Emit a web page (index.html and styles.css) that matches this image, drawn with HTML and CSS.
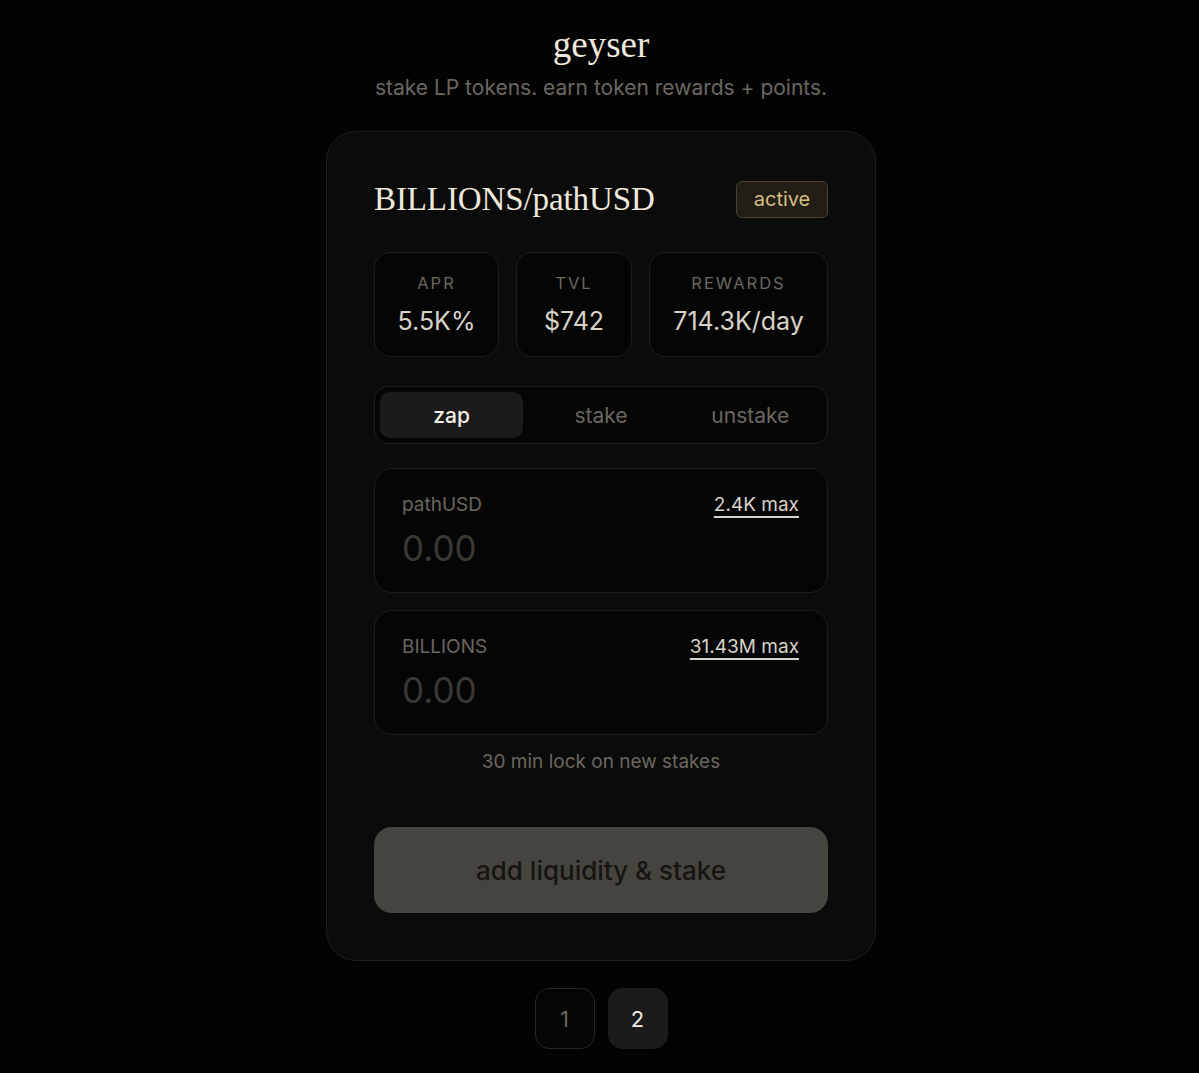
FILE: index.html
```html
<!DOCTYPE html>
<html lang="en">
<head>
<meta charset="utf-8">
<title>geyser</title>
<link rel="stylesheet" href="styles.css">
</head>
<body>
<main class="page">
  <header class="hero">
    <h1 class="brand">geyser</h1>
    <p class="tagline">stake LP tokens. earn token rewards + points.</p>
  </header>

  <section class="card">
    <div class="card-head">
      <h2 class="pair">BILLIONS/pathUSD</h2>
      <span class="badge">active</span>
    </div>

    <div class="stats">
      <div class="stat stat-apr">
        <div class="stat-label">APR</div>
        <div class="stat-value">5.5K%</div>
      </div>
      <div class="stat stat-tvl">
        <div class="stat-label">TVL</div>
        <div class="stat-value">$742</div>
      </div>
      <div class="stat stat-rewards">
        <div class="stat-label">REWARDS</div>
        <div class="stat-value">714.3K/day</div>
      </div>
    </div>

    <div class="tabs">
      <button class="tab is-active">zap</button>
      <button class="tab">stake</button>
      <button class="tab">unstake</button>
    </div>

    <div class="field">
      <div class="field-row">
        <span class="field-label">pathUSD</span>
        <a class="field-max">2.4K max</a>
      </div>
      <div class="field-value">0.00</div>
    </div>

    <div class="field">
      <div class="field-row">
        <span class="field-label">BILLIONS</span>
        <a class="field-max">31.43M max</a>
      </div>
      <div class="field-value">0.00</div>
    </div>

    <p class="note">30 min lock on new stakes</p>

    <button class="cta">add liquidity &amp; stake</button>
  </section>

  <nav class="pager">
    <button class="page-btn">1</button>
    <button class="page-btn is-current">2</button>
  </nav>
</main>
</body>
</html>
```

FILE: styles.css
```css
* { box-sizing: border-box; }

html, body {
  margin: 0;
  padding: 0;
  background: #030303;
}

body {
  font-family: Inter, "Noto Sans", sans-serif;
  color: #d8d2c8;
}

.page {
  display: flex;
  flex-direction: column;
  align-items: center;
  padding-top: 23px;
  padding-left: 3px;
}

.hero {
  text-align: center;
}

.brand {
  margin: 0;
  font-family: "Liberation Serif", serif;
  font-weight: 400;
  font-size: 37px;
  line-height: 44px;
  color: #eee8dc;
}

.tagline {
  margin: 0;
  margin-top: 8px;
  font-size: 21px;
  line-height: 26px;
  color: #6b6760;
}

.card {
  margin-top: 30px;
  width: 550px;
  padding: 48px 47px 47px 47px;
  background: #0b0b0b;
  border: 1px solid #1e1e1e;
  border-radius: 30px;
  display: flex;
  flex-direction: column;
}

.card-head {
  display: flex;
  justify-content: space-between;
  align-items: center;
  height: 38px;
}

.pair {
  margin: 0;
  font-family: "Liberation Serif", serif;
  font-weight: 400;
  font-size: 33px;
  line-height: 38px;
  color: #eee8dc;
  letter-spacing: -0.1px;
}

.badge {
  display: inline-flex;
  align-items: center;
  justify-content: center;
  width: 92px;
  height: 37px;
  background: #221e16;
  border: 1px solid #4a4130;
  border-radius: 6px;
  color: #d6bd82;
  font-size: 20px;
}

.stats {
  margin-top: 34px;
  display: flex;
  gap: 17px;
}

.stat {
  height: 105px;
  background: #050505;
  border: 1px solid #1d1d1d;
  border-radius: 16px;
  display: flex;
  flex-direction: column;
  align-items: center;
  justify-content: center;
}

.stat-apr { width: 125px; }
.stat-tvl { width: 116px; }
.stat-rewards { flex: 1; }

.stat-label {
  font-size: 16.5px;
  letter-spacing: 2px;
  color: #6b6760;
  line-height: 20px;
}

.stat-value {
  margin-top: 13px;
  font-size: 25px;
  line-height: 30px;
  color: #d8d2c8;
}

.tabs {
  margin-top: 29px;
  height: 58px;
  display: flex;
  gap: 6px;
  padding: 5px;
  background: #050505;
  border: 1px solid #1d1d1d;
  border-radius: 14px;
}

.tab {
  flex: 1;
  border: 0;
  background: transparent;
  border-radius: 10px;
  font-family: inherit;
  font-size: 21px;
  color: #6b6760;
  padding: 0;
}

.tab.is-active {
  background: #1b1b1b;
  color: #f2eee6;
  font-weight: 500;
}

.field {
  margin-top: 24px;
  height: 125px;
  padding: 24px 28px 0 27px;
  background: #050505;
  border: 1px solid #1d1d1d;
  border-radius: 18px;
}

.field + .field { margin-top: 17px; }

.field-row {
  display: flex;
  justify-content: space-between;
  align-items: baseline;
  line-height: 24px;
}

.field-label {
  font-size: 19px;
  color: #6b6760;
}

.field-max {
  font-size: 19px;
  color: #d8d2c8;
  text-decoration: underline;
  text-underline-offset: 5px;
  text-decoration-thickness: 1.5px;
}

.field-value {
  margin-top: 10px;
  font-size: 35px;
  line-height: 42px;
  color: #3a3835;
}

.note {
  margin: 16px 0 0 0;
  text-align: center;
  font-size: 19px;
  line-height: 22px;
  color: #6b6760;
}

.cta {
  margin-top: 54px;
  height: 86px;
  width: 100%;
  border: 0;
  border-radius: 18px;
  background: #46443f;
  color: #161513;
  font-family: inherit;
  font-size: 26px;
  font-weight: 500;
}

.pager {
  margin-top: 27px;
  display: flex;
  gap: 13px;
}

.page-btn {
  width: 60px;
  height: 61px;
  border-radius: 14px;
  border: 1px solid #262626;
  background: #050505;
  color: #6b6760;
  font-family: inherit;
  font-size: 22px;
  padding: 0;
}

.page-btn.is-current {
  background: #1b1b1b;
  border-color: #1b1b1b;
  color: #f2eee6;
}
```
